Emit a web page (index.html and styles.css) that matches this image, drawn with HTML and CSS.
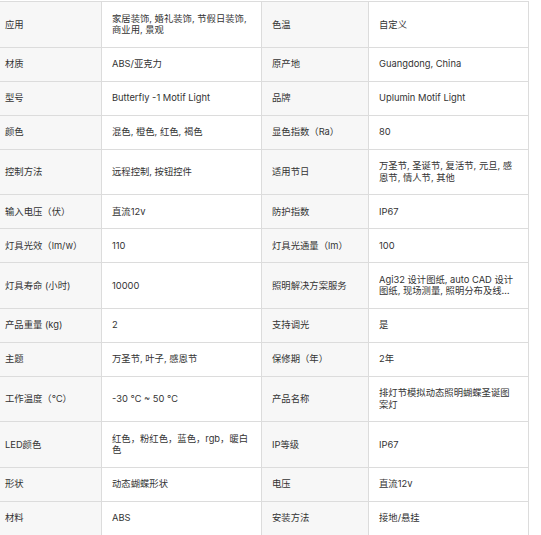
FILE: index.html
```html
<!DOCTYPE html>
<html lang="zh-CN">
<head>
<meta charset="utf-8">
<title>产品参数</title>
<link rel="stylesheet" href="styles.css">
</head>
<body>
<table class="spec">
  <colgroup>
    <col class="c-label"><col class="c-value"><col class="c-label"><col class="c-value">
  </colgroup>
  <tbody>
    <tr><th>应用</th><td>家居装饰, 婚礼装饰, 节假日装饰, 商业用, 景观</td><th>色温</th><td>自定义</td></tr>
    <tr><th>材质</th><td>ABS/亚克力</td><th>原产地</th><td>Guangdong, China</td></tr>
    <tr><th>型号</th><td>Butterfly -1 Motif Light</td><th>品牌</th><td>Uplumin Motif Light</td></tr>
    <tr><th>颜色</th><td>混色, 橙色, 红色, 褐色</td><th>显色指数（Ra）</th><td>80</td></tr>
    <tr><th>控制方法</th><td>远程控制, 按钮控件</td><th>适用节日</th><td>万圣节, 圣诞节, 复活节, 元旦, 感恩节, 情人节, 其他</td></tr>
    <tr><th>输入电压（伏）</th><td>直流12v</td><th>防护指数</th><td>IP67</td></tr>
    <tr><th>灯具光效（lm/w）</th><td>110</td><th>灯具光通量（lm）</th><td>100</td></tr>
    <tr><th>灯具寿命 (小时)</th><td>10000</td><th>照明解决方案服务</th><td><div class="clamp">Agi32 设计图纸, auto CAD 设计图纸, 现场测量, 照明分布及线路设计, 灯具选型</div></td></tr>
    <tr><th>产品重量 (kg)</th><td>2</td><th>支持调光</th><td>是</td></tr>
    <tr><th>主题</th><td>万圣节, 叶子, 感恩节</td><th>保修期（年）</th><td>2年</td></tr>
    <tr><th>工作温度（℃）</th><td>-30 ℃ ~ 50 ℃</td><th>产品名称</th><td>排灯节模拟动态照明蝴蝶圣诞图案灯</td></tr>
    <tr><th>LED颜色</th><td>红色，粉红色，蓝色，rgb，暖白色</td><th>IP等级</th><td>IP67</td></tr>
    <tr><th>形状</th><td>动态蝴蝶形状</td><th>电压</th><td>直流12v</td></tr>
    <tr><th>材料</th><td>ABS</td><th>安装方法</th><td>接地/悬挂</td></tr>
  </tbody>
</table>
</body>
</html>
```
FILE: styles.css
```css
html, body {
  margin: 0;
  padding: 0;
  background: #fff;
}
body {
  font-family: Inter, "Noto Sans CJK SC", sans-serif;
  font-size: 9.33px;
  line-height: 11.5px;
  color: #333;
  overflow: hidden;
}
.spec {
  border-collapse: collapse;
  table-layout: fixed;
  width: 534px;
  margin: 1px 0 0 -6px;
}
.c-label { width: 107px; }
.c-value { width: 160px; }
.spec th,
.spec td {
  border: 1px solid #dcdcdc;
  padding: 10.75px 10px;
  text-align: left;
  vertical-align: middle;
  font-weight: normal;
}
.spec th {
  background: #f7f7f7;
}
.spec td {
  background: #fff;
}
.clamp {
  display: -webkit-box;
  -webkit-box-orient: vertical;
  -webkit-line-clamp: 2;
  overflow: hidden;
}
```
